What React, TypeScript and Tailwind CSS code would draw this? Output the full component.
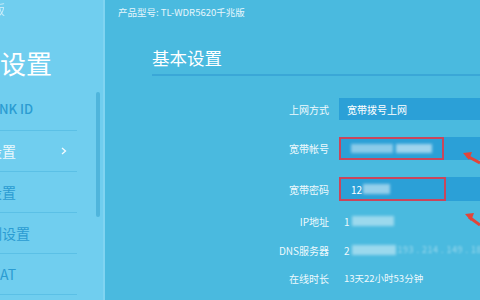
export default function App() {
  return (
    <div className="relative w-[480px] h-[300px] overflow-hidden flex bg-[#4abadf] font-['Noto_Sans_CJK_SC','Noto_Sans',sans-serif]">
      <aside className="relative w-[103px] shrink-0 h-full bg-[#70ceef] flex flex-col overflow-hidden">
        <div className="h-[20px] pt-[2px] leading-[14px] text-[13px] text-white/60 blur-[0.6px] -ml-[8px]">版</div>
        <div className="mt-[29px] h-[28px] leading-[28px] text-[26px] text-white">设置</div>
        <nav className="mt-[13px] flex flex-col w-[77px]">
          <div className="h-[41px] border-b border-[#5bc0e6] flex items-center pb-[2px]">
            <span className="text-[13px] font-medium text-[#2b9cd2] whitespace-nowrap -ml-[1px]">NK ID</span>
          </div>
          <div className="h-[41px] border-b border-[#5bc0e6] flex items-center justify-between pr-[10px]">
            <span className="text-[14px] text-[#eaf8fd] whitespace-nowrap -ml-[12px]">设置</span>
            <svg width="6" height="8" viewBox="0 0 6 8">
              <polyline points="1,1 4.5,4 1,7" fill="none" stroke="#f4fbfe" strokeWidth="1.3" />
            </svg>
          </div>
          <div className="h-[41px] border-b border-[#5bc0e6] flex items-center">
            <span className="text-[14px] text-[#2b9cd2] whitespace-nowrap -ml-[12px]">设置</span>
          </div>
          <div className="h-[41px] border-b border-[#5bc0e6] flex items-center">
            <span className="text-[14px] text-[#2b9cd2] whitespace-nowrap -ml-[12px]">制设置</span>
          </div>
          <div className="h-[41px] border-b border-[#5bc0e6] flex items-center">
            <span className="text-[14px] text-[#2b9cd2] whitespace-nowrap -ml-[10px]">NAT</span>
          </div>
        </nav>
        <div className="absolute left-[96px] top-[92px] w-[4px] h-[125px] rounded-full bg-[#4fb5dc]" />
      </aside>
      <div className="w-[2px] shrink-0 h-full bg-[#80d4f1]" />
      <main className="flex-1 flex flex-col text-white overflow-hidden">
        <div className="mt-[6px] pl-[13px] h-[12px] leading-[12px] text-[9.5px] text-[#e6f6fc] whitespace-nowrap">
          产品型号: TL-WDR5620千兆版
        </div>
        <div className="ml-[47px] mt-[30px] pb-[6px] border-b-2 border-[#3aa7d7]">
          <div className="h-[20px] leading-[20px] text-[17.5px] text-white">基本设置</div>
        </div>
        <div className="ml-[47px] mt-[22px] flex flex-col text-[10px]">
          <div className="h-[22px] flex items-center gap-[10px]">
            <div className="w-[177px] shrink-0 text-right text-[#eef9fd]">上网方式</div>
            <div className="w-[200px] shrink-0 h-full bg-[#2ba0d7] flex items-center pl-[8px] text-white whitespace-nowrap">宽带拨号上网</div>
          </div>
          <div className="mt-[17px] h-[23px] flex items-center gap-[10px]">
            <div className="w-[177px] shrink-0 text-right text-[#eef9fd]">宽带帐号</div>
            <div className="w-[200px] shrink-0 h-full bg-[#2ba0d7] flex">
              <div className="w-[105px] h-full border-2 border-[#c9465c] flex items-center pl-[10px] gap-[3px]">
                <span className="w-[42px] h-[9px] bg-white/45 blur-[1.5px]" />
                <span className="w-[36px] h-[9px] bg-white/55 blur-[1.5px]" />
              </div>
            </div>
          </div>
          <div className="mt-[17px] h-[24px] flex items-center gap-[10px]">
            <div className="w-[177px] shrink-0 text-right text-[#eef9fd]">宽带密码</div>
            <div className="w-[200px] shrink-0 h-full bg-[#2ba0d7] flex">
              <div className="w-[107px] h-full border-2 border-[#c9465c] flex items-center pl-[10px] gap-[1px]">
                <span className="text-white">12</span>
                <span className="w-[27px] h-[10px] bg-white/50 blur-[1.5px]" />
              </div>
            </div>
          </div>
          <div className="mt-[10px] h-[20px] flex items-center gap-[15px]">
            <div className="w-[177px] shrink-0 text-right text-[#eef9fd]">IP地址</div>
            <div className="flex items-center gap-[2px]">
              <span className="text-[#eef9fd]">1</span>
              <span className="w-[42px] h-[10px] bg-white/45 blur-[1.5px]" />
            </div>
          </div>
          <div className="mt-[9px] h-[20px] flex items-center gap-[15px]">
            <div className="w-[177px] shrink-0 text-right text-[#eef9fd]">DNS服务器</div>
            <div className="flex items-center gap-[2px] whitespace-nowrap">
              <span className="text-[#eef9fd]">2</span>
              <span className="w-[44px] h-[10px] bg-white/45 blur-[1.5px]" />
              <span className="text-[9px] text-white/45 blur-[1px] tracking-[0.5px]">193 . 214 . 149 . 180 . 188</span>
            </div>
          </div>
          <div className="mt-[8px] h-[20px] flex items-center gap-[15px]">
            <div className="w-[177px] shrink-0 text-right text-[#eef9fd]">在线时长</div>
            <div className="text-[9.5px] text-[#eef9fd] whitespace-nowrap">13天22小时53分钟</div>
          </div>
        </div>
      </main>
      <svg className="absolute left-[458px] top-[147px]" width="22" height="20" viewBox="0 0 22 20">
        <line x1="9" y1="9" x2="22" y2="16" stroke="#e2453a" strokeWidth="3" />
        <polygon points="5,6 14,5 11,13" fill="#e2453a" />
      </svg>
      <svg className="absolute left-[460px] top-[208px]" width="20" height="20" viewBox="0 0 20 20">
        <line x1="9" y1="9" x2="20" y2="17" stroke="#e2453a" strokeWidth="3" />
        <polygon points="5,6 14,5 11,13" fill="#e2453a" />
      </svg>
    </div>
  );
}
